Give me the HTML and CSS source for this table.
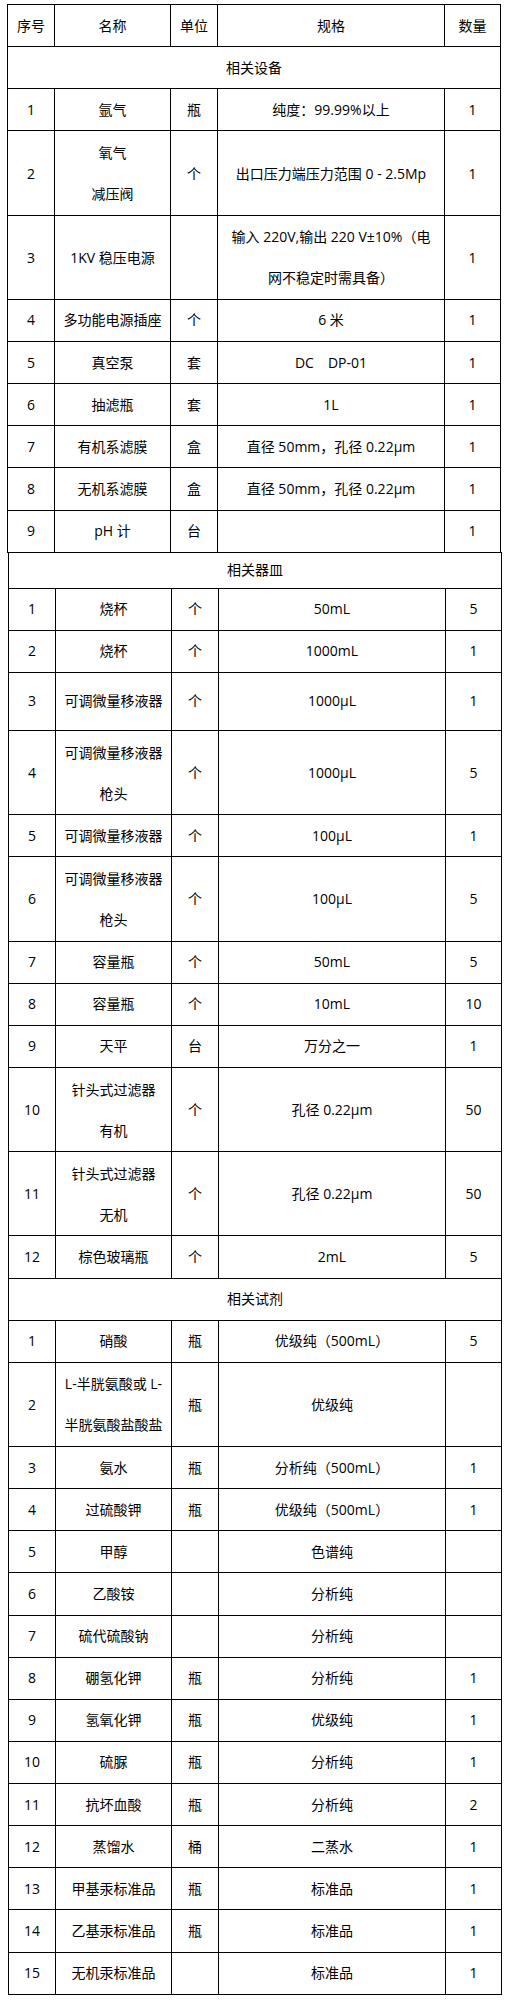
FILE: index.html
```html
<!DOCTYPE html>
<html lang="zh-CN">
<head>
<meta charset="utf-8">
<title>设备清单</title>
<link rel="stylesheet" href="styles.css">
</head>
<body>
<div class="page">
  <table class="list first">
    <colgroup>
      <col class="c-no"><col class="c-name"><col class="c-unit"><col class="c-spec"><col class="c-qty">
    </colgroup>
    <tbody>
      <tr class="u1"><td>序号</td><td>名称</td><td>单位</td><td>规格</td><td>数量</td></tr>
      <tr class="u1"><td colspan="5">相关设备</td></tr>
      <tr class="u1"><td>1</td><td>氩气</td><td>瓶</td><td>纯度<span class="punc">：</span>99.99%以上</td><td>1</td></tr>
      <tr class="u2"><td>2</td><td>氧气<br>减压阀</td><td>个</td><td>出口压力端压力范围 0 - 2.5Mp</td><td>1</td></tr>
      <tr class="u2"><td>3</td><td>1KV 稳压电源</td><td></td><td>输入 220V,输出 220 V±10%（电<br>网不稳定时需具备）</td><td>1</td></tr>
      <tr class="u1"><td>4</td><td>多功能电源插座</td><td>个</td><td>6 米</td><td>1</td></tr>
      <tr class="u1"><td>5</td><td>真空泵</td><td>套</td><td>DC　DP-01</td><td>1</td></tr>
      <tr class="u1"><td>6</td><td>抽滤瓶</td><td>套</td><td>1L</td><td>1</td></tr>
      <tr class="u1"><td>7</td><td>有机系滤膜</td><td>盒</td><td>直径 50mm，孔径 0.22μm</td><td>1</td></tr>
      <tr class="u1"><td>8</td><td>无机系滤膜</td><td>盒</td><td>直径 50mm，孔径 0.22μm</td><td>1</td></tr>
      <tr class="u1"><td>9</td><td>pH 计</td><td>台</td><td></td><td>1</td></tr>
    </tbody>
  </table>
  <table class="list second">
    <colgroup>
      <col class="c-no"><col class="c-name"><col class="c-unit"><col class="c-spec"><col class="c-qty">
    </colgroup>
    <tbody>
      <tr class="s36"><td colspan="5">相关器皿</td></tr>
      <tr class="u1"><td>1</td><td>烧杯</td><td>个</td><td>50mL</td><td>5</td></tr>
      <tr class="u1"><td>2</td><td>烧杯</td><td>个</td><td>1000mL</td><td>1</td></tr>
      <tr class="s58"><td>3</td><td>可调微量移液器</td><td>个</td><td>1000μL</td><td>1</td></tr>
      <tr class="u2"><td>4</td><td>可调微量移液器<br>枪头</td><td>个</td><td>1000μL</td><td>5</td></tr>
      <tr class="u1"><td>5</td><td>可调微量移液器</td><td>个</td><td>100μL</td><td>1</td></tr>
      <tr class="u2"><td>6</td><td>可调微量移液器<br>枪头</td><td>个</td><td>100μL</td><td>5</td></tr>
      <tr class="u1"><td>7</td><td>容量瓶</td><td>个</td><td>50mL</td><td>5</td></tr>
      <tr class="u1"><td>8</td><td>容量瓶</td><td>个</td><td>10mL</td><td>10</td></tr>
      <tr class="u1"><td>9</td><td>天平</td><td>台</td><td>万分之一</td><td>1</td></tr>
      <tr class="u2"><td>10</td><td>针头式过滤器<br>有机</td><td>个</td><td>孔径 0.22μm</td><td>50</td></tr>
      <tr class="u2"><td>11</td><td>针头式过滤器<br>无机</td><td>个</td><td>孔径 0.22μm</td><td>50</td></tr>
      <tr class="u1"><td>12</td><td>棕色玻璃瓶</td><td>个</td><td>2mL</td><td>5</td></tr>
      <tr class="u1"><td colspan="5">相关试剂</td></tr>
      <tr class="u1"><td>1</td><td>硝酸</td><td>瓶</td><td>优级纯（500mL）</td><td>5</td></tr>
      <tr class="u2"><td>2</td><td>L-半胱氨酸或 L-<br>半胱氨酸盐酸盐</td><td>瓶</td><td>优级纯</td><td></td></tr>
      <tr class="u1"><td>3</td><td>氨水</td><td>瓶</td><td>分析纯（500mL）</td><td>1</td></tr>
      <tr class="u1"><td>4</td><td>过硫酸钾</td><td>瓶</td><td>优级纯（500mL）</td><td>1</td></tr>
      <tr class="u1"><td>5</td><td>甲醇</td><td></td><td>色谱纯</td><td></td></tr>
      <tr class="u1"><td>6</td><td>乙酸铵</td><td></td><td>分析纯</td><td></td></tr>
      <tr class="u1"><td>7</td><td>硫代硫酸钠</td><td></td><td>分析纯</td><td></td></tr>
      <tr class="u1"><td>8</td><td>硼氢化钾</td><td>瓶</td><td>分析纯</td><td>1</td></tr>
      <tr class="u1"><td>9</td><td>氢氧化钾</td><td>瓶</td><td>优级纯</td><td>1</td></tr>
      <tr class="u1"><td>10</td><td>硫脲</td><td>瓶</td><td>分析纯</td><td>1</td></tr>
      <tr class="u1"><td>11</td><td>抗坏血酸</td><td>瓶</td><td>分析纯</td><td>2</td></tr>
      <tr class="u1"><td>12</td><td>蒸馏水</td><td>桶</td><td>二蒸水</td><td>1</td></tr>
      <tr class="u1"><td>13</td><td>甲基汞标准品</td><td>瓶</td><td>标准品</td><td>1</td></tr>
      <tr class="u1"><td>14</td><td>乙基汞标准品</td><td>瓶</td><td>标准品</td><td>1</td></tr>
      <tr class="u1"><td>15</td><td>无机汞标准品</td><td></td><td>标准品</td><td>1</td></tr>
    </tbody>
  </table>
</div>
</body>
</html>
```

FILE: styles.css
```css
html, body {
  margin: 0;
  padding: 0;
  background: #ffffff;
}

.page {
  padding: 4px 0 0 7px;
}

.list {
  border-collapse: collapse;
  table-layout: fixed;
  width: 493px;
  font-family: "Open Sans", "Noto Sans CJK SC", sans-serif;
  font-size: 14px;
  color: #000000;
}

.second {
  margin-top: -1px;
  margin-left: 1px;
}

.c-no { width: 47px; }
.c-name { width: 116px; }
.c-unit { width: 47px; }
.c-spec { width: 227px; }
.c-qty { width: 56px; }

.list td {
  border: 1px solid #000000;
  padding: 0;
  text-align: center;
  vertical-align: middle;
  line-height: 20px;
  white-space: nowrap;
}

.punc {
  font-family: "Noto Sans CJK TC", "Noto Sans CJK SC", sans-serif;
}

.u1 { height: 42.13px; }
.u2 { height: 84.26px; }
.u2 td { line-height: 41px; }
.s36 { height: 36px; }
.s58 { height: 58px; }
```
